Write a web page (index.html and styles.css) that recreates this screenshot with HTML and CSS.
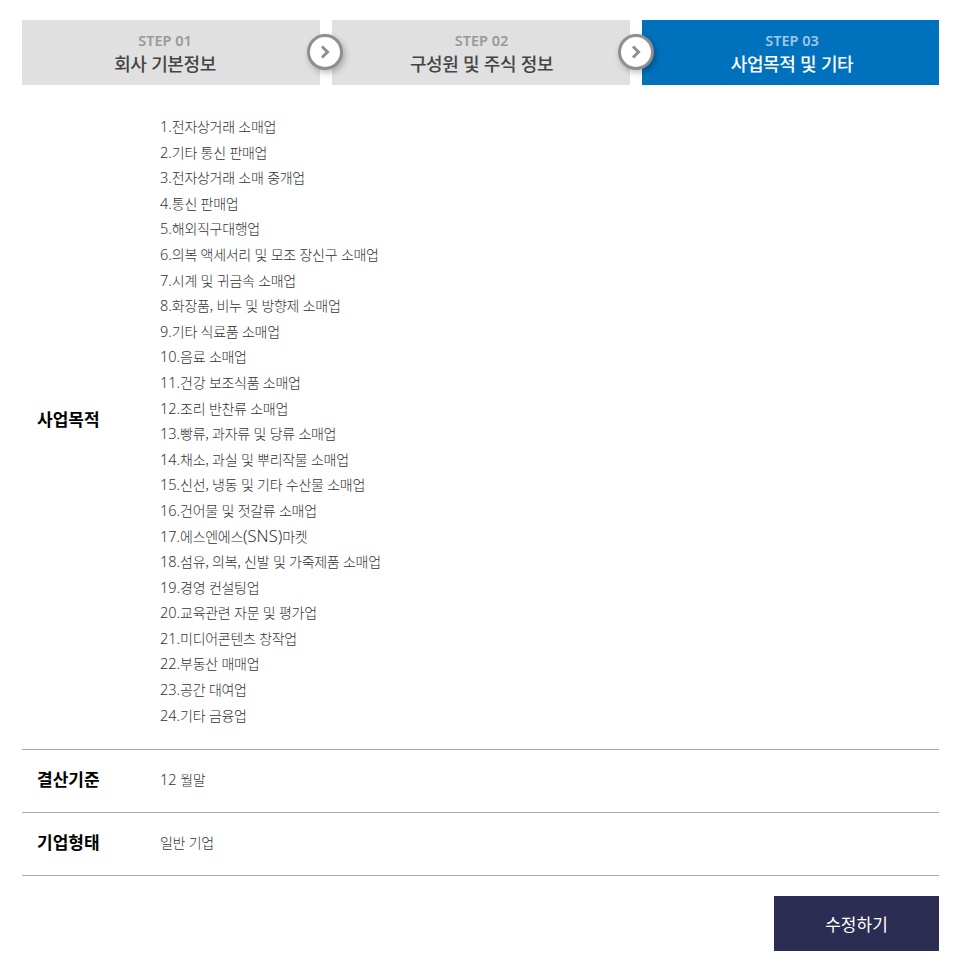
FILE: index.html
```html
<!DOCTYPE html>
<html lang="ko">
<head>
    <meta charset="UTF-8">
    <title>사업목적 및 기타</title>
    <link rel="stylesheet" href="styles.css">
</head>
<body>
    <div class="wrap">
        <ul class="steps">
            <li class="step step-first">
                <span class="step-no">STEP 01</span>
                <strong class="step-name">회사 기본정보</strong>
                <span class="step-arrow">
                    <svg viewBox="0 0 12 14" width="12" height="14"><path d="M3 1.5l5.5 5.5-5.5 5.5" fill="none" stroke="#8f8f8f" stroke-width="3"/></svg>
                </span>
            </li>
            <li class="step step-second">
                <span class="step-no">STEP 02</span>
                <strong class="step-name">구성원 및 주식 정보</strong>
                <span class="step-arrow">
                    <svg viewBox="0 0 12 14" width="12" height="14"><path d="M3 1.5l5.5 5.5-5.5 5.5" fill="none" stroke="#8f8f8f" stroke-width="3"/></svg>
                </span>
            </li>
            <li class="step step-on">
                <span class="step-no">STEP 03</span>
                <strong class="step-name">사업목적 및 기타</strong>
            </li>
        </ul>

        <div class="row row-purpose">
            <div class="row-label">사업목적</div>
            <ul class="purpose-list">
                <li><span class="num">1.</span>전자상거래 소매업</li>
                <li><span class="num">2.</span>기타 통신 판매업</li>
                <li><span class="num">3.</span>전자상거래 소매 중개업</li>
                <li><span class="num">4.</span>통신 판매업</li>
                <li><span class="num">5.</span>해외직구대행업</li>
                <li><span class="num">6.</span>의복 액세서리 및 모조 장신구 소매업</li>
                <li><span class="num">7.</span>시계 및 귀금속 소매업</li>
                <li><span class="num">8.</span>화장품, 비누 및 방향제 소매업</li>
                <li><span class="num">9.</span>기타 식료품 소매업</li>
                <li><span class="num">10.</span>음료 소매업</li>
                <li><span class="num">11.</span>건강 보조식품 소매업</li>
                <li><span class="num">12.</span>조리 반찬류 소매업</li>
                <li><span class="num">13.</span>빵류, 과자류 및 당류 소매업</li>
                <li><span class="num">14.</span>채소, 과실 및 뿌리작물 소매업</li>
                <li><span class="num">15.</span>신선, 냉동 및 기타 수산물 소매업</li>
                <li><span class="num">16.</span>건어물 및 젓갈류 소매업</li>
                <li><span class="num">17.</span>에스엔에스<span class="latin">(SNS)</span>마켓</li>
                <li><span class="num">18.</span>섬유, 의복, 신발 및 가죽제품 소매업</li>
                <li><span class="num">19.</span>경영 컨설팅업</li>
                <li><span class="num">20.</span>교육관련 자문 및 평가업</li>
                <li><span class="num">21.</span>미디어콘텐츠 창작업</li>
                <li><span class="num">22.</span>부동산 매매업</li>
                <li><span class="num">23.</span>공간 대여업</li>
                <li><span class="num">24.</span>기타 금융업</li>
            </ul>
        </div>
        <div class="row">
            <div class="row-label">결산기준</div>
            <div class="row-value"><span class="num">12</span> 월말</div>
        </div>
        <div class="row">
            <div class="row-label">기업형태</div>
            <div class="row-value">일반 기업</div>
        </div>

        <div class="actions">
            <button type="button" class="btn-edit">수정하기</button>
        </div>
    </div>
</body>
</html>
```

FILE: styles.css
```css
* {
    box-sizing: border-box;
}
body {
    margin: 0;
    font-family: "Noto Sans CJK KR", "Noto Sans", sans-serif;
    color: #333;
    background: #fff;
}
ul {
    list-style: none;
    margin: 0;
    padding: 0;
}
.wrap {
    width: 917px;
    margin-left: 22px;
    padding-top: 20px;
}
.steps {
    display: grid;
    grid-template-columns: 298px 298px 297px;
    column-gap: 12px;
    margin-bottom: 29px;
}
.step {
    position: relative;
    height: 65px;
    background: #e0e0e0;
    text-align: center;
    padding-top: 9px;
}
.step-first {
    padding-right: 12px;
}
.step-second {
    padding-left: 1px;
}
.step-no {
    display: block;
    font-family: "Noto Sans", sans-serif;
    font-size: 14.5px;
    line-height: 23px;
    font-weight: 600;
    color: #999;
}
.step-name {
    display: block;
    font-size: 18px;
    line-height: 23px;
    font-weight: 500;
    letter-spacing: -0.4px;
    color: #444;
}
.step-on {
    background: #0071bc;
    padding-left: 3px;
}
.step-on .step-no {
    color: #a3c6e6;
}
.step-on .step-name {
    color: #fff;
}
.step-arrow {
    position: absolute;
    top: 14px;
    right: -23px;
    z-index: 1;
    display: flex;
    align-items: center;
    justify-content: center;
    width: 36px;
    height: 36px;
    border: 3px solid #8f8f8f;
    border-radius: 50%;
    background: #fff;
    box-shadow: 2px 3px 6px rgba(0, 0, 0, 0.25);
}
.step-second .step-arrow {
    right: -24px;
}
.row {
    display: flex;
    align-items: center;
    height: 63px;
    border-bottom: 1px solid #aaa;
}
.row-purpose {
    height: auto;
    padding-bottom: 21px;
}
.row-label {
    width: 138px;
    padding-left: 15px;
    margin-bottom: 6px;
    font-size: 17px;
    font-weight: 700;
    color: #000;
}
.row-value,
.purpose-list {
    font-size: 14px;
    font-weight: 300;
    letter-spacing: -0.3px;
    color: #333;
}
.row-value {
    margin-bottom: 4px;
}
.purpose-list li {
    height: 25.6px;
    line-height: 25.6px;
}
.num,
.latin {
    font-family: "Noto Sans", sans-serif;
    line-height: 1;
    letter-spacing: 0;
}
.num {
    font-size: 14.5px;
}
.latin {
    font-size: 16.5px;
}
.actions {
    display: flex;
    justify-content: flex-end;
    padding-top: 20px;
}
.btn-edit {
    width: 165px;
    height: 55px;
    border: none;
    background: #2b2d52;
    color: #fff;
    font-family: inherit;
    font-size: 17px;
    cursor: pointer;
}
```
